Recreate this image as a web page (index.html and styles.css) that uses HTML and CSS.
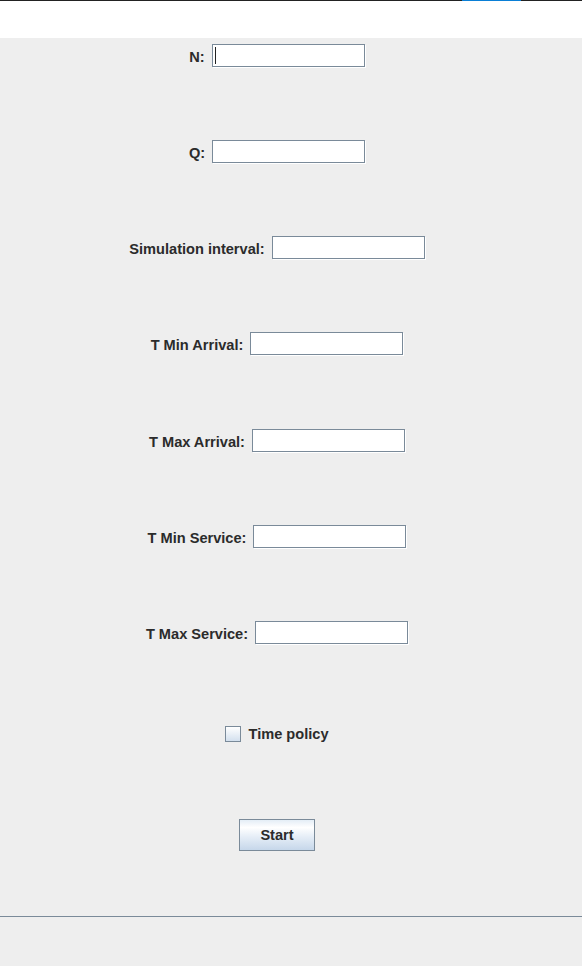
FILE: index.html
```html
<!DOCTYPE html>
<html lang="en">
<head>
<meta charset="utf-8">
<title>Queue Simulation</title>
<link rel="stylesheet" href="styles.css">
</head>
<body>
<header class="titlebar">
  <div class="topline"><span class="topline-accent"></span></div>
</header>
<main class="panel">
  <div class="row"><label class="label">N:</label><div class="field"><span class="caret"></span></div></div>
  <div class="row"><label class="label">Q:</label><div class="field"></div></div>
  <div class="row"><label class="label">Simulation interval:</label><div class="field"></div></div>
  <div class="row row-tall"><label class="label">T Min Arrival:</label><div class="field"></div></div>
  <div class="row"><label class="label">T Max Arrival:</label><div class="field"></div></div>
  <div class="row"><label class="label">T Min Service:</label><div class="field"></div></div>
  <div class="row"><label class="label">T Max Service:</label><div class="field"></div></div>
  <div class="row row-check"><span class="checkbox"></span><span class="label">Time policy</span></div>
  <div class="row row-button"><button class="btn">Start</button></div>
</main>
<footer class="statusbar"></footer>
</body>
</html>
```
FILE: styles.css
```css
* { box-sizing: border-box; }
html, body {
  margin: 0;
  padding: 0;
  background: #eeeeee;
  font-family: "Liberation Sans", Arial, sans-serif;
}
.titlebar {
  height: 38px;
  background: #ffffff;
}
.topline {
  position: relative;
  height: 1px;
  background: #222222;
}
.topline-accent {
  position: absolute;
  left: 462px;
  top: 0;
  width: 59px;
  height: 1px;
  background: #0a7fd6;
}
.panel {
  height: 879px;
  padding: 6px 28px 0 0;
  border-bottom: 1px solid #7a8a99;
  display: flex;
  flex-direction: column;
}
.row {
  height: 96px;
  flex: none;
  display: flex;
  justify-content: center;
  align-items: flex-start;
  gap: 7px;
}
.row-tall { height: 97px; }
.row > .label { line-height: 26px; }
.label {
  font-size: 14.6px;
  font-weight: bold;
  color: #2b2b2b;
  white-space: nowrap;
}
.field {
  position: relative;
  width: 153px;
  height: 23px;
  background: #ffffff;
  border: 1px solid #7a8a99;
  box-shadow: 1px 1px 0 #ffffff;
}
.caret {
  position: absolute;
  left: 2px;
  top: 2px;
  width: 1px;
  height: 17px;
  background: #222222;
}
.row-check {
  height: 93px;
  padding-top: 8px;
  gap: 7px;
  align-items: flex-start;
}
.row-check .label { line-height: 18px; }
.checkbox {
  margin-top: 1px;
  width: 16px;
  height: 16px;
  border: 1px solid #7a8a99;
  background: linear-gradient(#ffffff, #d3e0ee);
}
.row-button {
  height: auto;
  padding-top: 9px;
}
.btn {
  width: 76px;
  height: 32px;
  border: 1px solid #7a8a99;
  border-radius: 0;
  background: linear-gradient(#e4edf6 0%, #ffffff 25%, #e6eef7 55%, #c6d7ea 100%);
  font-family: "Liberation Sans", Arial, sans-serif;
  font-size: 14.6px;
  font-weight: bold;
  color: #2b2b2b;
  padding: 0;
}
.statusbar {
  height: 49px;
  background: #eeeeee;
}
```
